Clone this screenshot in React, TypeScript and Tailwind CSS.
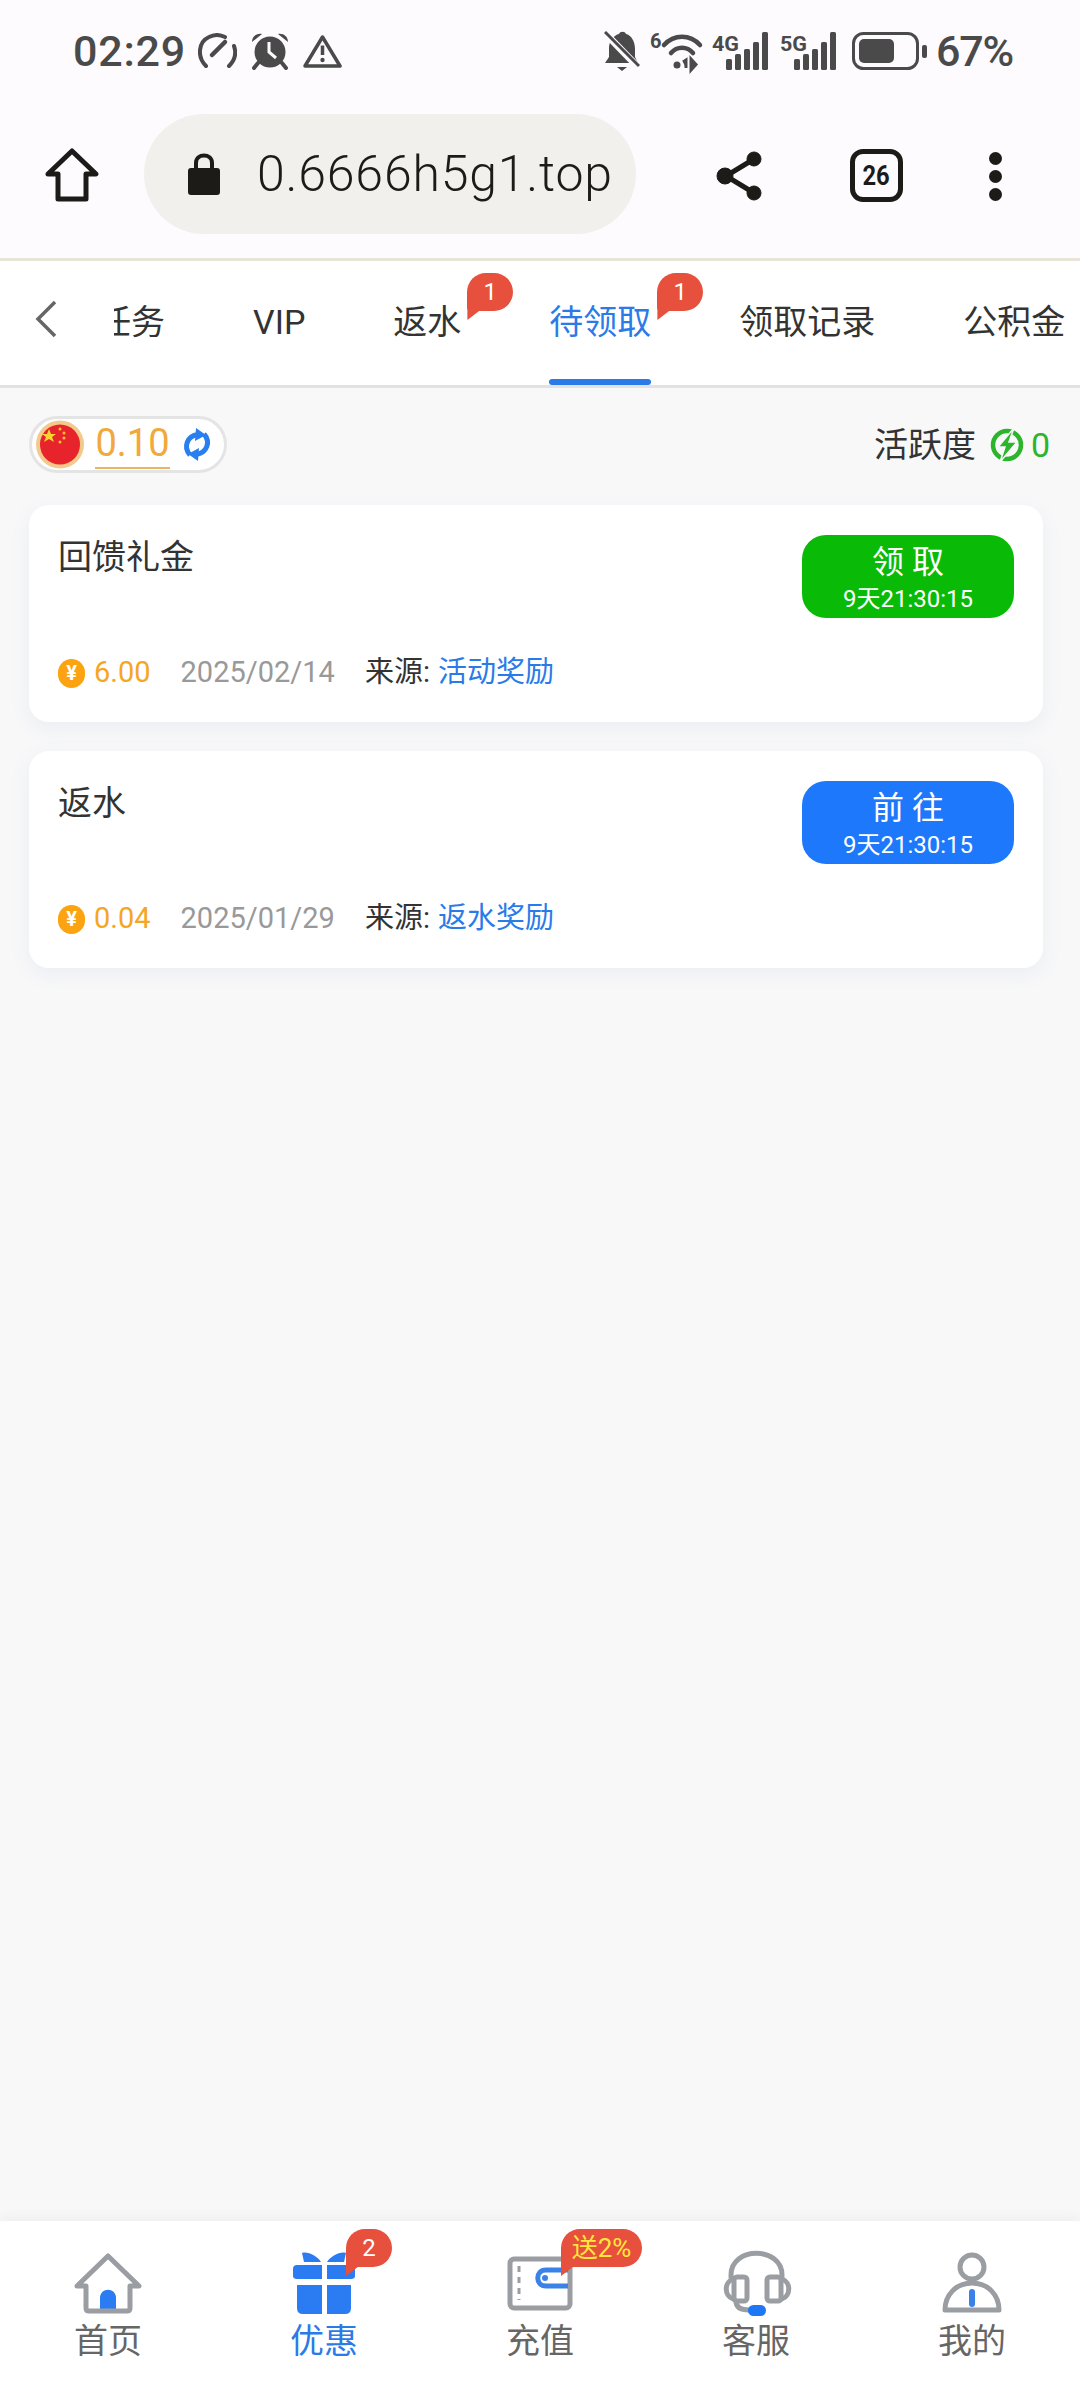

import React from "react";

const Gray = "#4a4a4a";

function Speed() {
  return (
    <svg width="39" height="36" viewBox="0 0 39 36" fill="none" stroke={Gray} strokeWidth="4" strokeLinecap="round">
      <path d="M8 33 C-1 24 0 9 11 4 C16 1.500 22 1.500 27 4" />
      <path d="M31 33 C37 27 38.500 20 36 13" />
      <path d="M14 22 L27 9" strokeWidth="4.500" />
    </svg>
  );
}
function Alarm() {
  return (
    <svg width="38" height="37" viewBox="0 0 38 37">
      <circle cx="19" cy="19" r="15.500" fill={Gray} />
      <path d="M1 9 C1 3 6 0 11 1 Z M37 9 C37 3 32 0 27 1 Z" fill={Gray} />
      <path d="M7 30 L3 35 M31 30 L35 35" stroke={Gray} strokeWidth="4" strokeLinecap="round" />
      <path d="M18 9 V19 L25 25" stroke="#fdfbfe" strokeWidth="3" fill="none" />
    </svg>
  );
}
function Warn() {
  return (
    <svg width="39" height="34" viewBox="0 0 39 34" fill="none">
      <path d="M19.500 3 L37 32 H2 Z" stroke={Gray} strokeWidth="3.500" strokeLinejoin="round" />
      <path d="M19.500 11.500 V21" stroke={Gray} strokeWidth="3.500" />
      <circle cx="19.500" cy="26" r="2.200" fill={Gray} />
    </svg>
  );
}
function Bell() {
  return (
    <svg width="36" height="40" viewBox="0 0 36 40">
      <path d="M1 32 L5 26 V17 C5 10 10 4 15 3 C16 0 21 0 22 3 C27 4 31 10 31 18 V26 L34 32 Z" fill={Gray} />
      <path d="M13 36 H23 L18 40 Z" fill={Gray} />
      <path d="M-1 0 L34 36" stroke="#fdfbfe" strokeWidth="7" />
      <path d="M1 1 L35 35" stroke={Gray} strokeWidth="3" />
    </svg>
  );
}
function Wifi() {
  return (
    <svg className="overflow-visible" width="52" height="40" viewBox="0 0 52 40" fill="none">
      <text x="0" y="17" fontSize="20" fontWeight="700" fill={Gray} fontFamily="Roboto, sans-serif">6</text>
      <path d="M14 14 C24 3 40 3 50 14" stroke={Gray} strokeWidth="4.500" strokeLinecap="round" />
      <path d="M21 22 C27 15 37 15 43 22" stroke={Gray} strokeWidth="4.500" strokeLinecap="round" />
      <circle cx="27" cy="34" r="3.500" fill={Gray} />
      <path d="M36 37 V29 L33 31 M41 28 V39 M41 28 L46 33.500 L41 39 Z" stroke={Gray} strokeWidth="3" fill={Gray} />
    </svg>
  );
}
function Signal({ label }: { label: string }) {
  return (
    <svg className="overflow-visible" width="57" height="38" viewBox="0 0 57 38">
      <text x="0" y="19" fontSize="20" fontWeight="700" fill={Gray} fontFamily="Roboto, sans-serif" textLength="27" lengthAdjust="spacingAndGlyphs">{label}</text>
      <rect x="14" y="27" width="6" height="11" rx="1.500" fill={Gray} />
      <rect x="23" y="22" width="6" height="16" rx="1.500" fill={Gray} />
      <rect x="32" y="17" width="6" height="21" rx="1.500" fill={Gray} />
      <rect x="41" y="10" width="6" height="28" rx="1.500" fill={Gray} />
      <rect x="50" y="0" width="6" height="38" rx="1.500" fill={Gray} />
    </svg>
  );
}
function Battery() {
  return (
    <svg width="76" height="38" viewBox="0 0 76 38">
      <rect x="1.500" y="1.500" width="64" height="35" rx="10" fill="none" stroke={Gray} strokeWidth="3" />
      <rect x="7" y="7" width="35" height="24" rx="5" fill={Gray} />
      <rect x="70" y="13" width="5" height="13" rx="2" fill={Gray} />
    </svg>
  );
}

function Bubble({ text, className, yellow }: { text: string; className: string; yellow?: boolean }) {
  return (
    <div className={`absolute ${className}`}>
      <div className={`h-[38px] rounded-[19px] rounded-bl-[4px] bg-[#e6503c] flex items-center justify-center ${yellow ? "w-[81px] text-[#ffe83b] text-[26px]" : "w-[46px] text-white text-[24px]"} leading-none whitespace-nowrap`}>
        {text}
      </div>
      <div className="absolute left-0 top-[24px] w-[18px] h-[23px] bg-[#e6503c] [clip-path:polygon(0_0,100%_40%,0_100%)]" />
    </div>
  );
}

const Blue = "#2b7cf3";
const Stroke = "#9a9ea2";

function HomeIcon() {
  return (
    <svg width="80" height="70" viewBox="0 0 80 70" fill="none">
      <path d="M32 63 V48 C32 37 48 37 48 48 V63 Z" fill={Blue} />
      <path d="M18 36 H9 L40 6 L71 36 H62 V58 Q62 61 59 61 H21 Q18 61 18 58 Z" stroke={Stroke} strokeWidth="5" strokeLinejoin="round" />
    </svg>
  );
}
function GiftIcon() {
  return (
    <svg width="80" height="70" viewBox="0 0 80 70" fill={Blue}>
      <path d="M18 3 C24 1 34 7 37 12 H20 Z" />
      <path d="M62 3 C56 1 46 7 43 12 H60 Z" />
      <path d="M13 15 H38 V29 H13 Q9 29 9 26 V19 Q9 15 13 15 Z" />
      <path d="M43 15 H67 Q71 15 71 19 V26 Q71 29 67 29 H43 Z" />
      <path d="M13 35 H38 V64 H19 Q13 64 13 58 Z" />
      <path d="M43 35 H67 V58 Q67 64 61 64 H43 Z" />
    </svg>
  );
}
function WalletIcon() {
  return (
    <svg width="80" height="70" viewBox="0 0 80 70" fill="none">
      <rect x="10" y="9" width="60" height="49" rx="4" stroke={Stroke} strokeWidth="5" />
      <path d="M19 16 V50" stroke={Stroke} strokeWidth="3" strokeDasharray="6 5" />
      <path d="M68 20 H46 C35 20 35 36 46 36 H68" stroke="#3b82e8" strokeWidth="5" />
      <circle cx="45" cy="28" r="3" fill="#3b82e8" />
    </svg>
  );
}
function HeadsetIcon() {
  return (
    <svg width="80" height="70" viewBox="0 0 80 70" fill="none" stroke={Stroke} strokeWidth="5" strokeLinecap="round">
      <path d="M15 27 V25 C15 -4 66 -4 66 25 V27" />
      <rect x="18" y="27" width="13" height="24" rx="3" />
      <rect x="51" y="27" width="14" height="24" rx="3" />
      <path d="M17 29 C8 32 8 46 17 49" />
      <path d="M66 29 C75 32 75 46 66 49" />
      <path d="M20 51 C20 57 24 60 33 60" />
      <rect x="32" y="55" width="18" height="11" rx="5.500" fill="#1e78f5" stroke="none" />
    </svg>
  );
}
function UserIcon() {
  return (
    <svg width="80" height="70" viewBox="0 0 80 70" fill="none" stroke={Stroke} strokeWidth="5" strokeLinejoin="round">
      <circle cx="40" cy="17" r="12" />
      <path d="M13 60 C13 45 24 33 40 33 C56 33 67 45 67 60 Z" />
      <path d="M40 42 V54" stroke="#3b82e8" strokeWidth="6" strokeLinecap="round" />
    </svg>
  );
}

function Card({ title, btn, btnColor, amount, date, source }: { title: string; btn: string; btnColor: string; amount: string; date: string; source: string }) {
  return (
    <div className="bg-white rounded-[20px] shadow-[0_6px_20px_rgba(90,110,170,0.08)] px-[29px] pt-[30px] pb-[32px]">
      <div className="flex justify-between items-start">
        <div className="text-[34px] leading-[44px] text-[#333]">{title}</div>
        <div className={`w-[212px] h-[83px] rounded-[24px] ${btnColor} text-white flex flex-col items-center`}>
          <div className="text-[32px] leading-[36px] mt-[9px] whitespace-pre">{btn}</div>
          <div className="text-[24px] leading-[28px] mt-[5px]">9天21:30:15</div>
        </div>
      </div>
      <div className="flex items-center h-[36px] mt-[37px] mb-[-1px] text-[29px]">
        <div className="w-[27px] h-[29px] rounded-full bg-[#fca311] text-white text-[20px] font-bold flex items-center justify-center">¥</div>
        <span className="ml-[9px] text-[#f5a623]">{amount}</span>
        <span className="ml-[30px] text-[#999]">{date}</span>
        <span className="ml-[30px] text-[#333]">来源:</span>
        <span className="ml-[8px] text-[#2a7ae8]">{source}</span>
      </div>
    </div>
  );
}

function NavItem({ label, active, children }: { label: string; active?: boolean; children: React.ReactNode }) {
  return (
    <div className="flex-1 flex flex-col items-center">
      {children}
      <div className={`text-[34px] leading-[42px] ${active ? "text-[#2a7ae8]" : "text-[#666]"}`}>{label}</div>
    </div>
  );
}

export default function App() {
  return (
    <div className="w-[1080px] h-[2400px] flex flex-col overflow-hidden bg-[#f8f8f9] font-['Roboto','Noto_Sans_CJK_SC',sans-serif]">
      {/* status bar */}
      <div className="h-[102px] shrink-0 bg-[#fdfbfe] flex items-center justify-between pl-[73px] pr-[67px] text-[#4a4a4a]">
        <div className="flex items-center">
          <span className="text-[43px] font-medium tracking-[0.8px] leading-none">02:29</span>
          <span className="ml-[12px] flex"><Speed /></span>
          <span className="ml-[14px] flex"><Alarm /></span>
          <span className="ml-[14px] flex"><Warn /></span>
        </div>
        <div className="flex items-center">
          <Bell />
          <span className="ml-[10px] flex"><Wifi /></span>
          <span className="ml-[10px] flex"><Signal label="4G" /></span>
          <span className="ml-[11px] flex"><Signal label="5G" /></span>
          <span className="ml-[15px] flex"><Battery /></span>
          <span className="ml-[8px] text-[43px] font-medium leading-none tracking-[-1.2px]">67%</span>
        </div>
      </div>
      {/* browser toolbar */}
      <div className="h-[156px] shrink-0 bg-[#fdfbfe] flex items-start pt-[12px]">
        <svg className="ml-[44px] mt-[33px]" width="56" height="56" viewBox="0 0 56 56" fill="none">
          <path d="M14 27 H4 L28 4 L52 27 H42 V52 H14 Z" stroke="#1c1b18" strokeWidth="5" strokeLinejoin="round" />
        </svg>
        <div className="ml-[44px] w-[492px] h-[120px] rounded-[60px] bg-[#f2f0ec] flex items-center pl-[44px] text-[#1c1b18]">
          <svg width="32" height="42" viewBox="0 0 32 42">
            <path d="M8 17 V10 C8 0 24 0 24 10 V17" fill="none" stroke="#1c1b18" strokeWidth="4" />
            <rect x="0" y="15" width="32" height="27" rx="3" fill="#1c1b18" />
          </svg>
          <span className="ml-[37px] text-[50px] font-light leading-none tracking-[0.8px]">0.6666h5g1.top</span>
        </div>
        <svg className="ml-[80px] mt-[36px]" width="48" height="52" viewBox="0 0 48 52" fill="#1c1b18" stroke="#1c1b18">
          <path d="M38 9 L10 26 L38 43" fill="none" strokeWidth="5" />
          <circle cx="38" cy="9" r="7" />
          <circle cx="9" cy="26" r="8" />
          <circle cx="38" cy="43" r="7" />
        </svg>
        <div className="ml-[86px] mt-[35px] w-[53px] h-[53px] rounded-[13px] border-[5px] border-[#1c1b18] flex items-center justify-center text-[28px] font-bold text-[#1c1b18] leading-none">
          <span className="[transform:scaleX(0.85)]">26</span>
        </div>
        <div className="ml-[86px] mt-[38px] flex flex-col gap-[5px]">
          <div className="w-[13px] h-[13px] rounded-full bg-[#1c1b18]" />
          <div className="w-[13px] h-[13px] rounded-full bg-[#1c1b18]" />
          <div className="w-[13px] h-[13px] rounded-full bg-[#1c1b18]" />
        </div>
      </div>
      {/* tabs */}
      <div className="h-[130px] shrink-0 bg-white border-t-[3px] border-t-[#e8e4d8] border-b-[3px] border-b-[#e2e2e2] flex">
        <div className="w-[114px] shrink-0 flex items-center pl-[33px] pb-[8px]">
          <svg width="26" height="40" viewBox="0 0 26 40" fill="none">
            <path d="M22 3 L5 20 L22 37" stroke="#666" strokeWidth="3.500" />
          </svg>
        </div>
        <div className="flex-1 overflow-hidden">
          <div className="flex ml-[-61px] h-full text-[34px] text-[#333] leading-none whitespace-nowrap">
            {["任务", "VIP", "返水", "待领取", "领取记录", "公积金"].map((t, i) => (
              <div key={t} className={`relative px-[44px] h-full flex items-center pb-[3px] ${i === 3 ? "text-[#2a7ae8]" : ""}`}>
                {t}
                {i === 3 && <div className="absolute left-[44px] right-[44px] bottom-0 h-[6px] rounded-[3px] bg-[#2a7ae8]" />}
                {(i === 2 || i === 3) && <Bubble text="1" className="left-[calc(100%-38px)] top-[12px] w-[46px]" />}
              </div>
            ))}
          </div>
        </div>
      </div>
      {/* content */}
      <div className="flex-1 pl-[29px] pr-[37px] pt-[28px]">
        <div className="flex items-center justify-between h-[57px] mb-[32px]">
          <div className="w-[198px] h-[57px] rounded-full border-[3px] border-[#e4e4e4] bg-white flex items-center pl-[4px]">
            <svg width="48" height="49" viewBox="0 0 48 49">
              <circle cx="24" cy="24.500" r="24" fill="#f3c98c" />
              <circle cx="24" cy="24.500" r="20" fill="#e7232b" />
              <path d="M13 9 L15 14 L20 14 L16 17 L18 22 L13 19 L8 22 L10 17 L6 14 L11 14 Z" fill="#fbd52f" />
              <circle cx="24" cy="9" r="1.500" fill="#fbc02d" />
              <circle cx="28" cy="13" r="1.500" fill="#fbc02d" />
              <circle cx="28" cy="18" r="1.500" fill="#fbc02d" />
              <circle cx="24" cy="22" r="1.500" fill="#fbc02d" />
            </svg>
            <span className="ml-[11px] w-[75px] h-[48px] border-b-[2px] border-[#e8b563] text-[38px] leading-[44px] text-center text-[#f0a93a]">0.10</span>
            <svg className="ml-[11px]" width="32" height="33" viewBox="0 0 32 33" fill="#2a7ff0">
              <path d="M9 27 C2 19 6 8 17 6.500" fill="none" stroke="#2a7ff0" strokeWidth="5" />
              <path d="M15 0 L25 7 L14 13 Z" />
              <path d="M23 6 C30 14 26 25 15 26.500" fill="none" stroke="#2a7ff0" strokeWidth="5" />
              <path d="M17 33 L7 26 L18 20 Z" />
            </svg>
          </div>
          <div className="flex items-center mr-[-7px]">
            <span className="text-[34px] leading-none text-[#333]">活跃度</span>
            <svg className="ml-[14px]" width="34" height="34" viewBox="0 0 34 34" fill="none">
              <circle cx="17" cy="17" r="14" stroke="#2cb52c" strokeWidth="4.500" />
              <path d="M24 0 L8 19 H15 L10 34 L27 14 H19 Z" fill="#2cb52c" stroke="#f8f8f9" strokeWidth="1.500" />
            </svg>
            <span className="ml-[7px] text-[34px] leading-none text-[#2cb52c]">0</span>
          </div>
        </div>
        <div className="flex flex-col gap-[29px]">
          <Card title="回馈礼金" btn="领 取" btnColor="bg-[#09bb07]" amount="6.00" date="2025/02/14" source="活动奖励" />
          <Card title="返水" btn="前 往" btnColor="bg-[#1d78fb]" amount="0.04" date="2025/01/29" source="返水奖励" />
        </div>
      </div>
      {/* bottom nav */}
      <div className="relative h-[179px] shrink-0 bg-white shadow-[0_-4px_12px_rgba(0,0,0,0.04)] flex pt-[29px]">
        <NavItem label="首页"><HomeIcon /></NavItem>
        <NavItem label="优惠" active><GiftIcon /></NavItem>
        <NavItem label="充值"><WalletIcon /></NavItem>
        <NavItem label="客服"><HeadsetIcon /></NavItem>
        <NavItem label="我的"><UserIcon /></NavItem>
        <Bubble text="2" className="left-[346px] top-[8px] w-[46px]" />
        <Bubble text="送2%" yellow className="left-[561px] top-[8px]" />
      </div>
    </div>
  );
}
